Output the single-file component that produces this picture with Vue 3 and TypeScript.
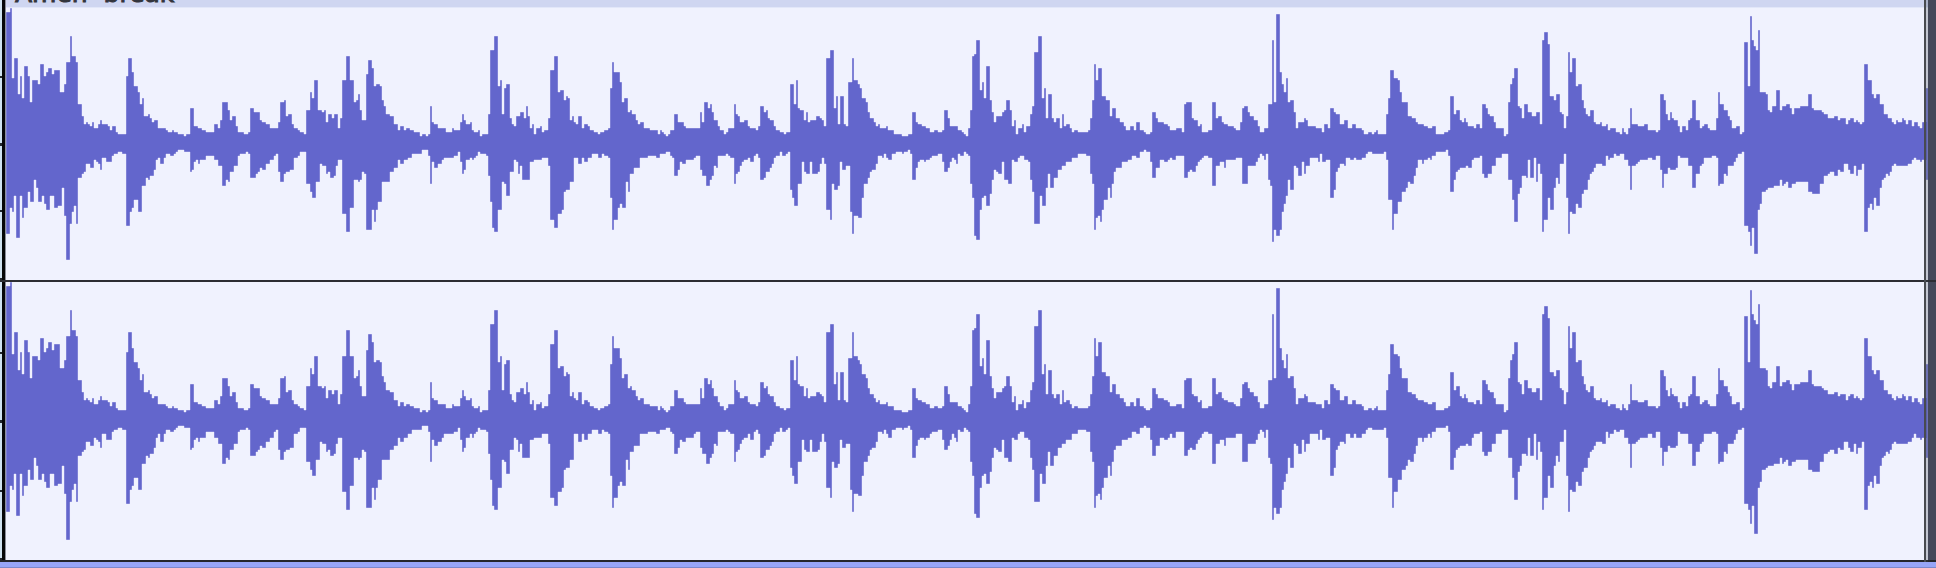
<script setup lang="ts">
type Step = [number, number]

interface Channel {
  name: string
  top: number
  height: number
  ticks: number[]
  path: string
}

// Peak envelope: "column row" steps on a 2px grid, in sections of 120 columns.
const SECTION = 120
const FIRST_COLUMN = 3
const LAST_COLUMN = 964

const upper: string[] = [
  '3 6,5 4,6 39,7 29,9 47,10 38,11 49,12 33,14 38,15 51,16 40,19 42,20 32,22 38,23 36,24 34,26 37,27 35,30 46,32 42,33 31,35 18,36 28,38 31,39 52,41 58,42 62,43 61,44 62,45 63,46 61,47 64,49 62,50 60,51 62,54 63,55 65,56 63,58 66,59 67,63 38,64 29,66 36,67 43,69 46,70 52,71 49,72 58,74 57,75 59,76 61,77 60,79 64,83 65,84 66,86 65,87 66,89 67,92 68,93 67,95 54,97 63,99 64,101 65,103 66,107 62,109 64,110 60,111 51,114 55,115 60,116 58,118 63,119 66',
  '0 66,2 67,4 66,5 54,7 56,10 60,11 61,13 62,15 64,19 61,20 51,22 50,23 58,24 57,26 62,27 64,29 65,30 66,32 67,33 55,35 46,36 49,37 40,39 55,41 56,42 55,43 61,44 57,46 59,47 57,49 64,50 59,51 40,53 28,55 40,57 51,58 50,59 47,60 55,61 60,63 37,64 30,66 34,67 43,68 42,70 43,71 50,72 53,73 57,75 58,77 62,79 65,80 63,82 65,83 64,85 65,87 66,90 68,91 67,93 68,94 67,95 53,96 61,97 62,99 64,103 66,106 64,107 65,110 61,111 57,112 60,113 62,115 61,116 65,117 66,119 65',
  '0 68,1 67,4 57,5 25,7 18,9 43,10 40,11 57,12 44,13 42,15 59,16 62,17 63,18 58,20 56,22 59,23 53,24 58,25 64,26 62,27 67,28 64,30 63,31 66,32 65,34 59,35 35,37 28,39 46,40 45,42 50,43 48,44 49,45 60,46 58,47 61,48 62,49 58,51 64,52 62,54 63,55 65,57 66,59 67,60 66,62 65,64 64,65 44,66 31,67 36,70 41,71 51,72 49,74 56,75 55,76 57,78 60,79 62,80 61,82 64,85 65,89 67,90 65,91 66,92 67,93 68,94 67,95 65,97 57,99 61,102 63,103 64,110 56,111 61,112 51,114 54,115 52,116 56,117 60,119 63',
  '0 65,2 67,3 66,4 64,7 52,8 57,9 58,10 61,12 60,14 63,15 64,18 65,19 63,20 53,22 56,23 55,24 59,25 60,27 63,28 65,30 66,32 67,33 66,35 42,37 52,38 40,39 54,40 55,42 60,43 56,44 61,45 60,48 58,50 59,51 60,52 63,53 29,55 25,57 54,58 48,59 62,60 48,62 62,63 63,64 41,66 29,67 40,69 42,70 44,71 49,73 51,74 56,75 59,77 61,78 63,79 62,80 64,83 63,84 65,87 67,91 68,94 67,96 56,98 61,99 62,101 63,103 64,105 66,107 65,109 66,111 65,112 55,114 59,115 63,119 65',
  '0 65,1 66,2 67,3 68,4 64,5 55,6 28,7 27,8 20,10 45,11 41,12 49,13 33,15 50,16 56,17 61,18 58,21 56,22 55,23 50,25 55,26 63,27 60,28 67,29 64,31 62,32 66,33 63,35 57,36 53,37 26,39 18,41 49,42 44,43 59,44 47,46 59,47 61,48 59,50 64,51 57,52 63,53 62,55 64,56 66,57 65,59 66,64 65,65 59,66 50,67 32,68 40,69 34,71 48,73 50,75 58,76 54,78 59,80 61,82 63,83 65,85 63,87 65,88 61,90 65,92 66,93 67,95 66,96 56,98 59,99 61,102 62,104 63,105 65,108 64,111 66,112 52,113 51,116 59,117 60,119 63',
  '0 62,1 66,4 65,6 51,8 59,9 58,11 61,12 62,14 63,17 64,18 65,20 61,21 54,22 53,24 56,25 58,27 60,29 63,30 66,32 64,34 52,36 20,37 51,38 7,40 36,41 42,42 46,43 39,44 51,45 50,47 56,48 64,49 61,52 59,53 60,54 63,58 64,61 66,62 62,64 64,65 54,67 56,68 57,70 62,72 60,74 64,76 62,78 64,81 65,82 67,84 66,86 67,87 66,88 65,89 67,93 57,94 49,95 35,97 39,99 40,100 46,101 51,104 58,106 59,108 61,109 62,112 63,114 64,116 63,118 67',
  '0 67,2 66,4 65,5 48,7 57,8 55,10 60,11 61,12 59,13 61,14 63,17 64,18 62,20 64,21 52,23 54,24 57,25 58,27 61,28 64,32 68,33 67,34 51,35 42,36 39,37 34,39 53,40 54,41 59,42 52,44 56,46 58,48 56,50 62,51 20,52 16,54 22,55 48,57 50,58 47,60 56,61 57,62 64,63 58,64 26,65 36,66 29,68 43,69 42,71 50,72 54,73 57,74 58,75 55,77 61,78 62,80 61,81 63,83 62,84 65,85 64,88 66,90 67,91 64,92 66,93 67,94 64,95 54,96 62,99 63,102 62,104 65,108 66,109 65,110 47,112 50,113 57,114 60,115 56,116 59,117 60,119 63',
  '0 66,1 63,3 65,4 60,5 59,6 50,8 60,10 64,11 63,12 62,14 64,15 65,18 59,19 46,20 52,22 55,24 58,25 60,26 64,28 63,30 67,31 66,32 21,34 43,35 8,36 20,37 23,38 25,39 15,40 46,43 47,44 55,45 56,46 53,48 45,50 55,51 53,53 52,55 54,56 57,57 54,60 53,64 47,66 54,67 55,71 56,72 57,74 59,77 58,79 60,80 59,83 62,84 60,85 59,87 61,88 60,89 61,90 62,91 61,92 32,94 40,96 47,97 49,98 47,100 52,102 57,104 59,106 61,107 62,108 60,109 61,111 59,112 60,113 62,114 60,116 63,117 61,119 63,120 64,121 61,123 44',
]

const lower: string[] = [
  '3 117,5 104,6 106,7 98,8 119,10 98,11 109,12 104,14 96,15 101,17 90,18 94,19 101,21 98,22 102,23 105,25 98,27 104,29 103,31 94,32 108,33 130,35 112,36 106,37 103,38 112,39 89,41 87,42 86,43 82,45 84,47 80,48 81,49 82,50 85,51 79,53 81,56 78,57 77,59 76,61 77,63 113,65 106,66 104,67 100,69 106,71 93,73 89,74 90,75 88,77 85,78 80,79 79,80 82,82 79,83 77,85 78,87 77,88 76,89 75,92 76,95 86,96 85,97 81,98 80,99 82,100 80,103 78,107 80,109 83,111 93,113 90,114 91,115 86,117 83,119 78',
  '0 77,3 76,4 77,5 89,8 87,9 86,10 84,11 85,13 82,15 80,17 78,18 77,19 86,20 91,22 87,23 86,25 85,27 79,29 78,30 76,33 92,35 96,36 99,38 91,40 82,41 83,43 87,44 86,45 89,47 88,48 83,49 80,51 107,53 116,55 104,57 90,59 91,60 90,61 86,62 87,63 115,66 105,67 111,68 105,69 101,71 91,75 86,77 84,79 80,80 82,82 80,84 79,86 77,91 75,94 78,95 92,96 81,97 84,99 82,101 80,102 79,107 78,109 76,110 81,111 87,112 85,113 80,115 79,116 80,117 79,118 78,119 76',
  '0 77,3 78,4 88,5 101,6 114,7 116,9 105,11 91,12 92,13 98,15 86,17 80,18 81,19 87,20 83,21 90,25 81,27 80,31 79,34 83,35 110,37 114,39 107,41 105,42 96,43 95,45 91,47 79,49 82,51 79,52 81,54 79,56 77,59 79,61 77,62 78,64 79,65 99,66 115,67 110,69 104,70 102,71 104,73 91,74 96,75 87,77 84,80 79,84 78,88 79,90 77,93 76,95 78,96 79,97 88,99 85,100 81,101 82,103 80,107 79,108 78,110 85,111 88,113 93,115 90,116 88,117 83,118 84,119 78',
  '0 78,3 77,4 78,5 79,7 92,8 87,9 86,10 83,11 81,12 80,14 79,15 81,17 78,18 77,19 79,20 90,22 89,23 86,25 84,26 82,27 79,28 78,30 76,31 78,33 77,34 76,35 95,36 99,37 103,39 92,41 81,42 86,43 87,45 81,46 87,49 86,50 82,51 79,52 82,53 105,55 110,56 92,57 95,59 93,60 81,61 85,63 83,65 106,66 117,67 108,69 109,71 99,72 92,74 89,75 86,76 85,78 82,79 78,81 79,82 77,83 79,84 80,86 77,88 76,91 77,92 76,94 75,95 77,96 90,98 84,99 81,100 80,102 81,103 80,105 79,106 78,109 77,111 81,112 86,114 84,115 81,116 79,117 80,118 82,119 77',
  '0 78,2 76,3 77,4 78,5 92,6 99,7 118,8 120,10 105,11 99,12 98,13 103,15 97,16 90,17 85,18 86,19 87,21 81,22 90,24 92,26 80,27 81,29 79,30 78,32 80,34 81,35 90,36 96,37 112,40 98,41 103,43 94,44 87,45 94,47 89,49 85,51 83,53 81,56 79,59 77,63 78,65 87,66 92,67 115,68 109,69 108,70 111,71 105,72 100,74 94,75 99,76 92,77 86,78 84,81 81,84 80,86 78,88 79,90 76,92 75,93 76,95 81,96 89,98 84,100 80,102 81,104 80,105 79,106 80,108 78,112 89,114 86,115 85,116 86,118 83,119 81',
  '0 80,1 79,2 78,4 79,6 93,8 83,10 81,12 84,13 80,18 79,21 92,24 83,28 81,29 79,30 77,31 78,32 80,33 77,34 90,35 93,36 121,37 115,38 118,40 115,41 106,42 102,43 98,44 90,45 95,47 83,48 84,49 88,51 81,52 87,53 83,55 79,59 81,60 77,61 81,63 80,65 99,67 95,68 86,69 84,70 82,72 83,73 79,75 80,77 79,78 80,81 79,83 77,84 76,86 77,92 76,93 80,94 100,96 115,97 107,99 101,101 96,103 94,104 91,105 92,107 88,108 84,109 80,111 82,112 80,114 79,115 80,116 78,118 76',
  '0 76,3 75,4 78,5 96,7 90,8 86,9 85,10 84,13 83,14 84,16 80,17 79,20 78,21 87,22 89,24 87,26 83,28 79,31 77,34 90,36 100,37 111,39 97,40 94,41 88,43 89,44 80,45 89,47 79,48 91,49 82,50 87,51 116,52 110,54 99,55 105,57 94,58 89,59 92,60 82,62 77,63 99,64 117,65 106,66 107,68 102,69 104,71 97,72 95,74 90,75 87,76 86,77 84,78 82,81 83,83 78,84 80,85 79,87 77,88 78,90 77,92 80,94 83,95 95,96 83,98 82,99 81,100 80,104 79,106 80,108 78,110 85,111 94,112 87,114 84,115 85,118 84,119 78',
  '0 79,4 83,6 94,8 87,10 83,11 82,12 79,16 78,18 79,19 93,20 92,22 87,23 88,24 83,27 81,28 79,29 77,31 76,32 113,34 116,35 123,36 114,37 127,39 105,40 102,41 96,43 95,44 94,47 93,50 90,51 93,52 92,53 91,54 94,56 92,58 91,64 96,66 97,70 92,72 88,74 87,75 86,77 88,79 85,80 86,82 82,84 85,85 87,87 83,88 88,89 85,91 82,92 116,94 104,95 102,96 105,97 99,98 103,100 94,101 90,102 89,103 87,104 88,105 86,106 83,107 82,108 83,114 82,116 80,117 79,118 80,120 81,121 80,123 90',
]

function parse(sections: string[]): Step[] {
  return sections.flatMap((section, index) =>
    section.split(',').map((pair): Step => {
      const [column, row] = pair.split(' ').map(Number)
      return [index * SECTION + column, row]
    }),
  )
}

const upperSteps = parse(upper)
const lowerSteps = parse(lower)

function outline(project: (row: number) => number): string {
  let d = `M${FIRST_COLUMN * 2} ${project(72)}`
  for (const [column, row] of upperSteps) d += `H${column * 2}V${project(row)}`
  d += `H${LAST_COLUMN * 2}`
  for (let i = lowerSteps.length - 1; i >= 0; i--) {
    const [column, row] = lowerSteps[i]
    d += `V${project(row)}H${column * 2}`
  }
  return d + 'Z'
}

const channels: Channel[] = [
  {
    name: 'Left channel',
    top: 7,
    height: 273,
    ticks: [77, 144, 211, 279],
    path: outline((row) => row * 2),
  },
  {
    name: 'Right channel',
    top: 282,
    height: 278,
    ticks: [353, 421, 491, 559],
    path: outline((row) => 2 * Math.round((273.4 + row * 2.045) / 2)),
  },
]
</script>

<template>
  <main class="track">
    <header class="title-row">
      <span class="ruler"></span>
      <h1 class="title">Amen&nbsp; break</h1>
      <span class="tail"></span>
    </header>
    <section v-for="channel in channels" :key="channel.name" class="channel">
      <svg
        class="ruler"
        :viewBox="`0 ${channel.top} 2 ${channel.height}`"
        preserveAspectRatio="none"
        aria-hidden="true"
      >
        <rect
          v-for="(tick, i) in channel.ticks"
          :key="tick"
          x="0"
          :y="tick - 1"
          width="2"
          :height="i === 1 ? 3 : 2"
          fill="#22272d"
        />
      </svg>
      <svg
        class="wave"
        :viewBox="`6 ${channel.top} 1922 ${channel.height}`"
        :style="{ height: `${channel.height}px` }"
        preserveAspectRatio="none"
        role="img"
        :aria-label="channel.name"
      >
        <path :d="channel.path" />
      </svg>
      <span class="tail"></span>
    </section>
    <footer class="selection"></footer>
    <span class="clip-end"></span>
  </main>
</template>

<style>
body {
  margin: 0;
}
</style>

<style scoped>
.track {
  position: relative;
  display: flex;
  flex-direction: column;
  overflow: hidden;
  background: #f0f2fe;
}

.title-row {
  display: flex;
  align-items: stretch;
  height: 7px;
  overflow: hidden;
  border-bottom: 1px solid #e2e7f9;
  margin-bottom: -1px;
  background: #cfd6f1;
}

.title {
  flex: 1;
  align-self: flex-end;
  margin: 0;
  padding: 0 9px;
  color: #33353d;
  font: 400 25px/26px "DejaVu Sans", Verdana, sans-serif;
  -webkit-text-stroke: 1px #33353d;
  white-space: nowrap;
}

.ruler {
  flex: none;
  width: 2px;
  background: #cfe2f0;
  border-right: 3px solid #050608;
  box-shadow: 1px 0 0 #8b8e99;
  margin-right: 1px;
}

.channel {
  display: flex;
  border-bottom: 2px solid #2c2d33;
}

.channel + .channel {
  border-bottom-color: #24262c;
}

.wave {
  flex: 1;
  min-width: 0;
  display: block;
}

.wave path {
  fill: #6366cc;
  stroke: #f0f2fe;
  stroke-width: 1;
  stroke-opacity: 0.4;
}

.tail {
  flex: none;
  width: 8px;
  background: #45495a;
}

.selection {
  height: 5px;
  background: #97a5f7;
  border-bottom: 1px solid #7b88cc;
}

.clip-end {
  position: absolute;
  top: 0;
  right: 8px;
  bottom: 6px;
  width: 2px;
  background: rgb(60 70 80 / 25%);
  border-left: 2px solid #484b50;
}
</style>
